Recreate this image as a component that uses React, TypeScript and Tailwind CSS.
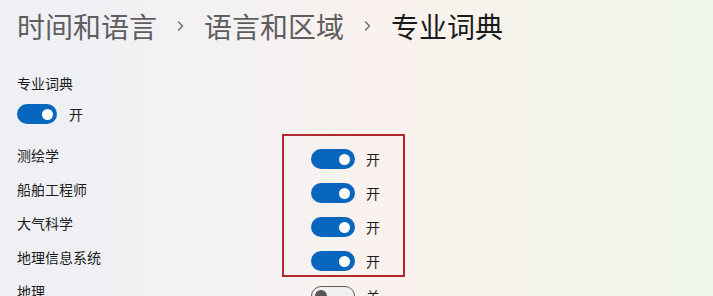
import React from "react";

function Chevron() {
  return (
    <svg width="7" height="10" viewBox="0 0 7 10" className="shrink-0">
      <path d="M1.5 1 L5.5 5 L1.5 9" fill="none" stroke="#6a6a6a" strokeWidth="1.4" strokeLinecap="round" strokeLinejoin="round" />
    </svg>
  );
}

function ToggleOn({ big = true }: { big?: boolean }) {
  return big ? (
    <span className="flex w-[44px] h-[20px] shrink-0 items-center justify-end rounded-full bg-[#0766bd] pr-[5px]">
      <span className="block w-[11px] h-[11px] rounded-full bg-white" />
    </span>
  ) : (
    <span className="flex w-[40px] h-[20px] shrink-0 items-center justify-end rounded-full bg-[#0766bd] pr-[4px]">
      <span className="block w-[11px] h-[11px] rounded-full bg-white" />
    </span>
  );
}

function ToggleOff() {
  return (
    <span className="flex w-[44px] h-[20px] shrink-0 items-center rounded-full border border-[#5c5c5c] bg-[#f3f1f0] pl-[3px]">
      <span className="block w-[12px] h-[12px] rounded-full bg-[#555555]" />
    </span>
  );
}

const labels = ["测绘学", "船舶工程师", "大气科学", "地理信息系统", "地理"];

export default function App() {
  return (
    <div className="w-[713px] h-[296px] overflow-hidden bg-[linear-gradient(90deg,#eef0f5_0%,#f3f1f3_30%,#faf2ee_55%,#f5f4ec_75%,#f0f6ea_100%)] font-['Noto_Sans_CJK_SC',sans-serif] text-[#1c1c1c]">
      <div className="flex h-[52px] items-center gap-[20px] pl-[17px] text-[28px] leading-[28px]">
        <span className="text-[#5e5e5e]">时间和语言</span>
        <Chevron />
        <span className="text-[#5e5e5e]">语言和区域</span>
        <Chevron />
        <span className="text-[#1b1b1b]">专业词典</span>
      </div>

      <div className="mt-[20px] flex h-[22px] items-center pl-[17px] text-[14px] leading-[14px]">专业词典</div>

      <div className="mt-[10px] flex h-[20px] items-center gap-[12px] pl-[17px] text-[14px] leading-[14px]">
        <ToggleOn big={false} />
        <span>开</span>
      </div>

      <div className="mt-[10px] flex">
        <div className="flex w-[282px] flex-col pl-[17px] pt-[4px] text-[14px] leading-[14px]">
          {labels.map((l) => (
            <div key={l} className="flex h-[34px] items-center">
              {l}
            </div>
          ))}
        </div>
        <div className="flex flex-col">
          <div className="flex w-[123px] flex-col gap-[14px] border-2 border-[#b3282c] pt-[13px] pb-[4px] pl-[27px]">
            {[0, 1, 2, 3].map((i) => (
              <div key={i} className="flex h-[20px] items-center gap-[11px] text-[14px] leading-[14px]">
                <ToggleOn />
                <span>开</span>
              </div>
            ))}
          </div>
          <div className="mt-[9px] flex h-[20px] items-center gap-[11px] pl-[29px] text-[14px] leading-[14px]">
            <ToggleOff />
            <span>关</span>
          </div>
        </div>
      </div>
    </div>
  );
}
